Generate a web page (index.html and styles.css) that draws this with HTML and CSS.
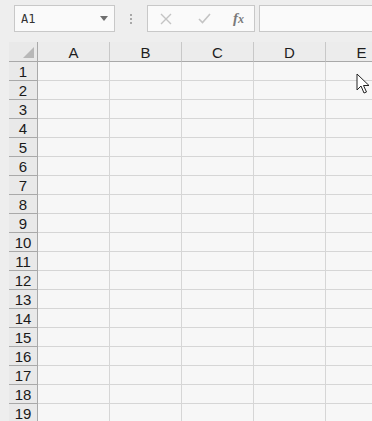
FILE: index.html
```html
<!DOCTYPE html>
<html lang="en">
<head>
    <meta charset="UTF-8">
    <title>Sheet</title>
    <link rel="stylesheet" href="styles.css">
</head>
<body>
    <div class="toolbar">
        <div class="namebox">
            <span class="ref">A1</span>
            <svg class="caret" width="8" height="5" viewBox="0 0 8 5"><path d="M0 0H8L4 5Z" fill="#6f6f6f"/></svg>
        </div>
        <div class="grip"><i></i><i></i><i></i></div>
        <div class="fbuttons">
            <svg width="12" height="12" viewBox="0 0 12 12"><path d="M1 1L11 11M11 1L1 11" stroke="#c4c4c4" stroke-width="1.4" fill="none"/></svg>
            <svg width="13" height="11" viewBox="0 0 13 11"><path d="M1 6L4.5 9.5L12 1" stroke="#c4c4c4" stroke-width="1.6" fill="none"/></svg>
            <span class="fx">f<sub>x</sub></span>
        </div>
        <div class="formula"></div>
    </div>

    <div class="sheet">
        <div class="row head">
            <div class="corner"><span class="tri"></span></div>
            <div class="col">A</div>
            <div class="col">B</div>
            <div class="col">C</div>
            <div class="col">D</div>
            <div class="col">E</div>
        </div>
        <div id="rows"></div>
    </div>

    <svg class="pointer" width="14" height="22" viewBox="0 0 14 22">
        <path d="M1 1V17L5 13L8 20L10.5 19L7.5 12.5H13Z" fill="#fff" stroke="#222" stroke-width="1" stroke-linejoin="round"/>
    </svg>

    <script>
        // build the rows 1..19
        const rows = document.getElementById('rows');
        for (let i = 1; i <= 19; i++) {
            const row = document.createElement('div');
            row.className = 'row';
            let html = `<div class="num">${i}</div>`;
            for (let c = 0; c < 5; c++) html += '<div class="cell"></div>';
            row.innerHTML = html;
            rows.appendChild(row);
        }
    </script>
</body>
</html>
```

FILE: styles.css
```css
body {
    margin: 0;
    background-color: #eeeeee;
    font-family: "Liberation Sans", Arial, sans-serif;
    color: #1e1e1e;
    overflow: hidden;
    width: 372px;
    height: 421px;
    position: relative;
}
.toolbar {
    display: flex;
    align-items: stretch;
    height: 27px;
    padding: 5px 0 10px 14px;
}
.namebox {
    box-sizing: border-box;
    width: 101px;
    background-color: #fafafa;
    border: 1px solid #c8c8c8;
    display: flex;
    align-items: center;
    justify-content: space-between;
    padding: 0 6px 0 6px;
}
.namebox .ref {
    font-family: "DejaVu Sans Mono", monospace;
    font-size: 12px;
    color: #333;
}
.grip {
    width: 32px;
    display: flex;
    flex-direction: column;
    align-items: center;
    justify-content: center;
    gap: 2px;
}
.grip i {
    width: 2px;
    height: 2px;
    background-color: #a8a8a8;
}
.fbuttons {
    box-sizing: border-box;
    width: 108px;
    background-color: #fafafa;
    border: 1px solid #c8c8c8;
    display: flex;
    align-items: center;
    padding-left: 12px;
    gap: 26px;
}
.fbuttons .fx {
    font-family: "Liberation Serif", serif;
    font-style: italic;
    font-weight: bold;
    font-size: 15px;
    color: #7a7a7a;
    margin-left: -4px;
}
.fbuttons .fx sub {
    font-size: 12px;
    vertical-align: 0;
}
.formula {
    flex: 1;
    margin-left: 4px;
    background-color: #fafafa;
    border: 1px solid #c8c8c8;
    border-right: none;
}
.sheet {
    padding-left: 9px;
    overflow: hidden;
}
.row {
    display: flex;
    height: 19px;
}
.row.head {
    height: 20px;
}
.corner, .num {
    box-sizing: border-box;
    flex: 0 0 29px;
    border-right: 1px solid #a9a9a9;
    border-bottom: 1px solid #a9a9a9;
    background-color: #e9e9e9;
}
.corner {
    position: relative;
}
.corner .tri {
    position: absolute;
    right: 3px;
    bottom: 3px;
    width: 0;
    height: 0;
    border-left: 11px solid transparent;
    border-bottom: 11px solid #b8b8b8;
}
.num {
    font-size: 15px;
    line-height: 19px;
    text-align: center;
    color: #1a1a1a;
}
.col {
    box-sizing: border-box;
    flex: 0 0 72px;
    border-right: 1px solid #c8c8c8;
    border-bottom: 1px solid #a9a9a9;
    font-size: 15px;
    line-height: 22px;
    text-align: center;
    background-color: #ececec;
}
.cell {
    box-sizing: border-box;
    flex: 0 0 72px;
    border-right: 1px solid #d6d6d6;
    border-bottom: 1px solid #d6d6d6;
    background-color: #f7f7f7;
}
.pointer {
    position: absolute;
    left: 356px;
    top: 73px;
}
```
